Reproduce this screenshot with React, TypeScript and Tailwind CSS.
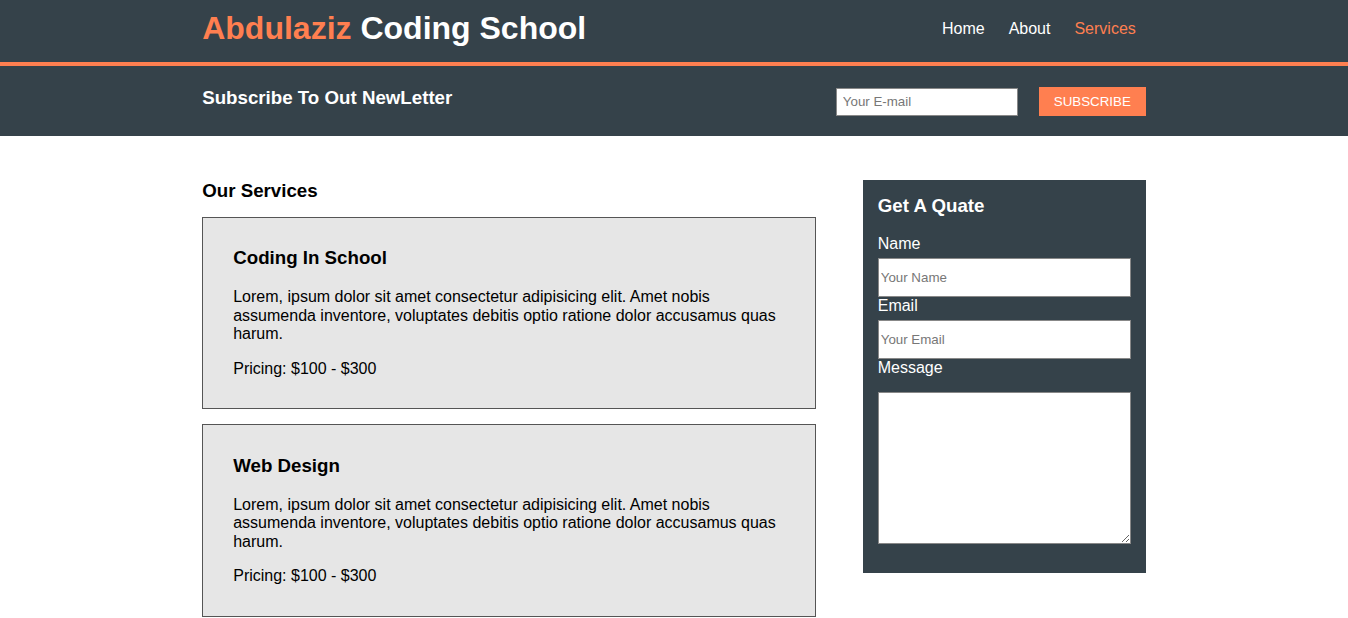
const cards = [
  { title: 'Coding In School' },
  { title: 'Web Design' },
];

const lorem =
  'Lorem, ipsum dolor sit amet consectetur adipisicing elit. Amet nobis assumenda inventore, voluptates debitis optio ratione dolor accusamus quas harum.';

function ServiceCard({ title }: { title: string }) {
  return (
    <article className="border border-[#555] bg-[#e6e6e6] px-[30px] pt-[11px] pb-[30px]">
      <h3 className="mt-[18.72px] mb-[19.72px] text-[18.72px] leading-[21.5px] font-bold">{title}</h3>
      <p className="text-base leading-[18.4px]">{lorem}</p>
      <p className="mt-4 text-base leading-[18.4px]">Pricing: $100 - $300</p>
    </article>
  );
}

export default function App() {
  return (
    <div className="min-h-[618px] bg-white font-['Liberation_Sans',Arial,sans-serif] text-black">
      {/* Header */}
      <header className="border-b-4 border-[#ff7f50] bg-[#35424a] text-white">
        <div className="mx-auto flex h-[62px] w-[70%] items-center justify-between pb-[5px]">
          <h1 className="text-[32px] leading-[37px] font-bold">
            <span className="text-[#ff7f50]">Abdulaziz</span> Coding School
          </h1>
          <nav>
            <ul className="flex gap-[4px] text-base">
              <li className="px-[10px]">Home</li>
              <li className="px-[10px]">About</li>
              <li className="px-[10px] text-[#ff7f50]">Services</li>
            </ul>
          </nav>
        </div>
      </header>

      {/* Newsletter */}
      <section className="bg-[#35424a] text-white">
        <div className="mx-auto flex h-[70px] w-[70%] items-start justify-between">
          <h2 className="mt-[21px] text-[18.72px] leading-[21.5px] font-bold">Subscribe To Out NewLetter</h2>
          <form className="mt-[21px] flex items-center gap-[21px]">
            <input
              type="email"
              placeholder="Your E-mail"
              className="h-[28px] w-[182px] border border-[#888] bg-white px-[6px] text-[13.33px] text-black placeholder:text-[#777]"
            />
            <button
              type="button"
              className="h-[29px] w-[107px] bg-[#ff7f50] text-[13.33px] text-white uppercase"
            >
              Subscribe
            </button>
          </form>
        </div>
      </section>

      {/* Main */}
      <div className="mx-auto mt-[44px] flex w-[70%] items-start justify-between">
        <section className="w-[65%]">
          <h3 className="mb-[15px] text-[18.72px] leading-[21.5px] font-bold">Our Services</h3>
          <div className="flex flex-col gap-[15px]">
            {cards.map((c) => (
              <ServiceCard key={c.title} title={c.title} />
            ))}
          </div>
        </section>

        <aside className="w-[30%] bg-[#35424a] px-[15px] pt-[15px] pb-[29px] text-white">
          <h3 className="mb-[18px] text-[18.72px] leading-[21.5px] font-bold">Get A Quate</h3>
          <form className="flex flex-col">
            <label className="text-base leading-[18.4px]">Name</label>
            <input
              type="text"
              placeholder="Your Name"
              className="mt-[5px] h-[39px] w-full border border-[#888] bg-white px-[2px] text-[13.33px] text-black placeholder:text-[#777]"
            />
            <label className="text-base leading-[18.4px]">Email</label>
            <input
              type="email"
              placeholder="Your Email"
              className="mt-[5px] h-[39px] w-full border border-[#888] bg-white px-[2px] text-[13.33px] text-black placeholder:text-[#777]"
            />
            <label className="text-base leading-[18.4px]">Message</label>
            <textarea className="mt-[14.6px] h-[152px] w-full border border-[#888] bg-white text-black" />
          </form>
        </aside>
      </div>
    </div>
  );
}
